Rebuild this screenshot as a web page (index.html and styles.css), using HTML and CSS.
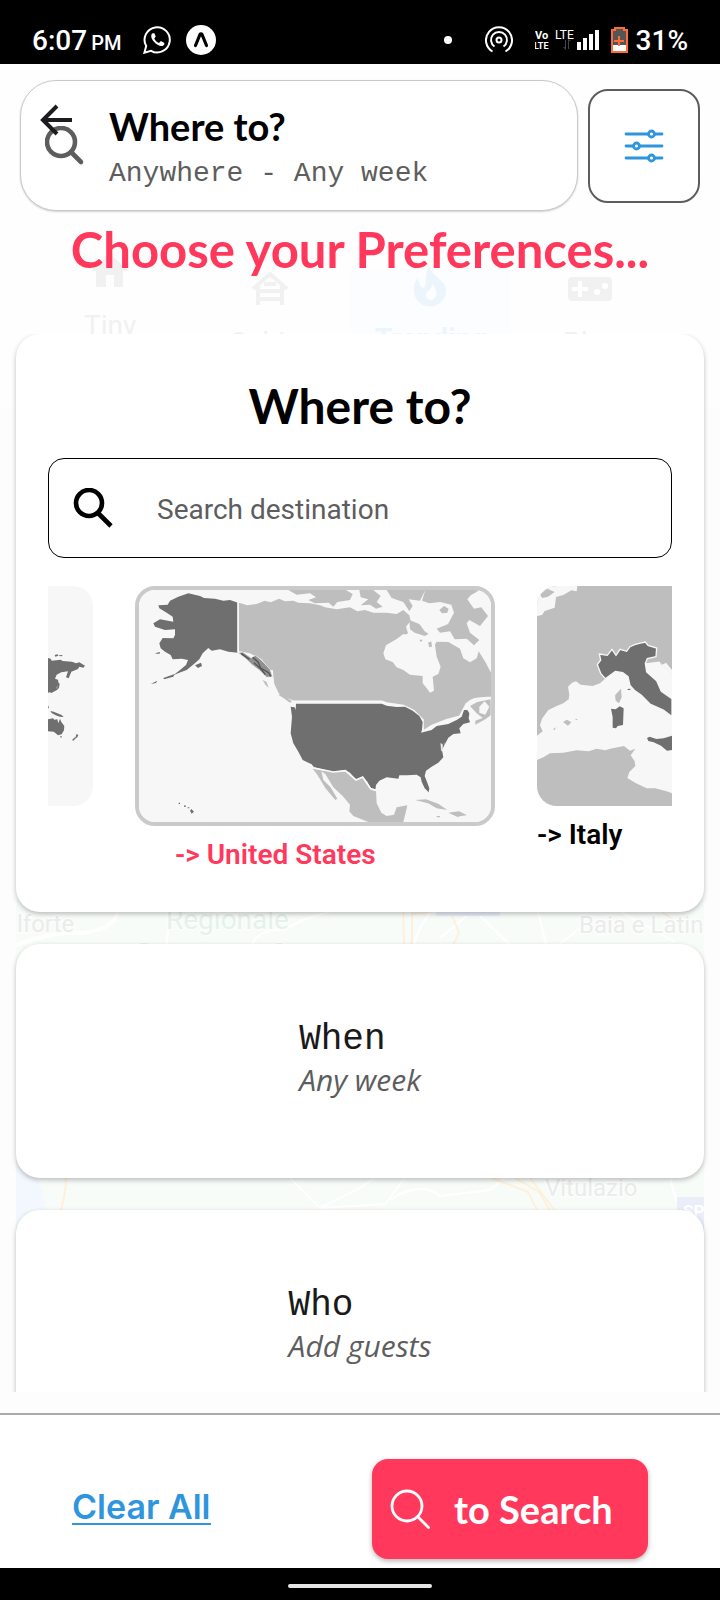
FILE: index.html
```html
<!DOCTYPE html>
<html lang="en">
<head>
<meta charset="utf-8">
<meta name="viewport" content="width=device-width, initial-scale=1">
<title>Choose your Preferences</title>
<link rel="stylesheet" href="styles.css">
</head>
<body>
<div class="app">
  <div class="status-bar">
    <span class="clock">6:07<small>PM</small></span>
    <svg class="whatsapp" width="28" height="28" viewBox="0 0 28 28" fill="none" stroke="#fff" stroke-width="2"><path d="M1.4 26.7 3.2 20A12.6 12.6 0 1 1 8 24.8Z"/><path d="M9.6 7.2C7.6 8.4 7.8 12 10.5 15.3s6.300 5.200 9 4.700c2-.7 2.200-2.600 1.600-3.300l-3.200-1.600-1.900 1.900c-2.200-1-3.800-2.600-4.700-4.600l1.400-1.900-1.300-3.200Z" fill="#fff" stroke="none"/></svg>
    <svg width="30" height="30" viewBox="0 0 30 30"><circle cx="15" cy="15" r="15" fill="#fff"/><path d="M9.500 20.500 14 9.500q1-1.500 2 0l4.500 11" fill="none" stroke="#000" stroke-width="3.200" stroke-linecap="round"/></svg>
    <span class="spacer"></span>
    <svg class="dot" width="8" height="8" viewBox="0 0 8 8"><circle cx="4" cy="4" r="4" fill="#fff"/></svg>
    <svg class="hotspot" width="28" height="28" viewBox="0 0 28 28" fill="none" stroke="#fff" stroke-width="2"><path d="M7.500 25.500A13 13 0 1 1 20.500 25.500"/><path d="M9.500 20.500A8 8 0 1 1 18.500 20.500"/><circle cx="14" cy="14" r="2.500"/></svg>
    <svg width="64" height="24" viewBox="0 0 64 24" font-family="Roboto, sans-serif" fill="#fff"><g font-weight="700"><text x="0" y="11" font-size="11">Vo</text><text x="-1" y="21" font-size="9">LTE</text></g><text x="20" y="11" font-size="12">LTE</text><path d="M30 12v7h-2l3 3V12M34 21v-8h2l-3-2v10" fill="#444"/><path d="M42 14h4v8h-4zM48 10h4v12h-4zM54 6h4v16h-4zM60 2h4v20h-4z"/></svg>
    <svg class="battery" width="17" height="26" viewBox="0 0 17 26"><path d="M1 3h3V1h9v2h3v22H1Z" fill="#555" stroke="#ff6c3c" stroke-width="2"/><path d="M2 18h13v6H2z" fill="#fff"/><path d="M8 9v10M3 14h10" stroke="#ff6c3c" stroke-width="2"/></svg>
    <span class="clock">31%</span>
  </div>

  <div class="page">
    <div class="backdrop" aria-hidden="true">
      <svg class="backdrop-categories" viewBox="0 0 720 150" fill="#f1f1f1" font-family="Roboto, sans-serif" font-size="28">
        <path d="M350 60h160v90H350z" fill="#fcfdfe"/>
        <path d="M91 61 110 44l19 17h-6v16h-9V65h-8v12H96V61Z"/>
        <g fill="none" stroke="#f1f1f1" stroke-width="4"><path d="m253 79 17-15 17 15M258 76v19M282 76v19M258 81h24M258 89h24M264 74h12"/></g>
        <path d="M430 56c2 12 16 14 16 24a16 16 0 0 1-32 1c-1-7 2-11 4-13 1 9 6 12 7 8 2-7-1-13 5-20Zm2 18c0 7-6 6-6 11 0 3 3 5 5 5 8-2 6-12 1-16Z" fill="#edf5fc" fill-rule="evenodd"/>
        <rect x="568" y="67" width="44" height="24" rx="4"/><path d="M580 71v16M572 79h16" stroke="#fff" stroke-width="4"/><circle cx="597" cy="82" r="3" fill="#fff"/><circle cx="605" cy="76" r="3" fill="#fff"/>
        <text x="84" y="125">Tiny</text><text x="229" y="142">Cabins</text><text x="375" y="138" font-weight="700" fill="#edf5fc">Trending</text><text x="563" y="142">Play</text>
      </svg>
      <svg class="backdrop-map" viewBox="16 900 688 350" fill="none" font-family="Roboto, sans-serif">
        <path d="M16 900h688v350H16z" fill="#f8fcf9"/>
        <path d="M16 1160h14l10 25 8 30v35H16z" fill="#f3f8fe"/>
        <g stroke="#fff" stroke-width="2"><path d="M16 945q40-14 60-12 30 0 40-16l4-12" stroke-width="4"/><path d="m160 900 10 20-4 26M250 948q8-20 35-18 15-12 60-22l40-8M414 944q6-22 22-38M440 938l34-28 35 34M536 904l10 40M560 944l25-20M600 900l75 42M290 1178l30 30 40-20 20-14M320 1208l65-4 20-26M390 1200q30-20 50-4l50-6 18-15M670 1175q5 30 14 36"/></g>
        <g stroke="#fff0db" stroke-width="2"><path d="m403 900 1 46M412 900v46M412 914l38-5 9 24-6 12M662 912l14 10M66 1176q0 20-7 40M492 1178l36 14 12 24M515 1178l24 14 14 24M530 1178l26 34"/></g>
        <path d="M436 900h64v16h-64zM677 1197h27v40h-27z" fill="#e9eef9"/>
        <g fill="#eaebeb" stroke="#fcfdfc" stroke-width="3" paint-order="stroke" font-size="24"><text x="17" y="932">lforte</text><text x="579" y="933">Baia e Latin</text><text x="545" y="1196">Vitulazio</text><text x="166" y="929" font-size="28" fill="#e4f2eb">Regionale</text><text x="138" y="960" fill="#e4f2eb">R</text><text x="271" y="960" fill="#e4f2eb">C</text></g>
        <text x="683" y="1217" font-size="17" font-weight="700" fill="#fff">SP</text>
      </svg>
    </div>

    <header class="top">
      <button class="search-pill" type="button">
        <svg width="40" height="40" viewBox="0 0 40 40" fill="none" stroke="#5e5d5e" stroke-width="4.600" stroke-linecap="round"><circle cx="16" cy="16" r="14"/><path d="m26 26 10 10"/></svg>
        <span class="pill-text"><span class="pill-title">Where to?</span><span class="pill-sub">Anywhere - Any week</span></span>
      </button>
      <a class="back" href="#back" aria-label="Back"><svg width="32" height="32" viewBox="0 0 32 32" fill="none" stroke="#1c1b1f" stroke-width="4"><path d="M32 16H3M17 2 3 16l14 14"/></svg></a>
      <button class="filter" type="button" aria-label="Filters"><svg width="40" height="36" viewBox="0 0 40 36" fill="#fff" stroke="#2f95dc" stroke-width="2.800" stroke-linecap="round"><path d="M2 6h36M2 18h36M2 30h36"/><circle cx="27.500" cy="6" r="3"/><circle cx="12.500" cy="18" r="3"/><circle cx="27.500" cy="30" r="3"/></svg></button>
    </header>

    <h1 class="headline">Choose your Preferences...</h1>

    <main class="cards">
      <section class="card where">
        <h2>Where to?</h2>
        <label class="search-box">
          <svg width="40" height="40" viewBox="0 0 40 40" fill="none" stroke="#000" stroke-width="4.600"><circle cx="16" cy="15" r="13"/><path d="m25 25 13 13"/></svg>
          <input type="text" placeholder="Search destination" aria-label="Search destination">
        </label>
        <div class="places">
          <div class="place world">
            <svg viewBox="144 -162 135 660" preserveAspectRatio="xMaxYMin slice"><path d="M144-162h135v660H144z" fill="#f7f7f7"/><path d="M144 54 152 56 155 62 182 59 188 63 216 65 228 70 238 67 255 77 250 83 238 80 234 87 214 95 206 115 198 112 204 94 184 97 170 104 165 116 174 119 176 131 168 146 158 154 150 157 144 158ZM164 45l9-2 2 4-9 3ZM178 45l10 1-2 3-8-1ZM176 128l3 3-2 12-6 7-10 5-8 5-2-3 12-7 8-6ZM144 238l15-3 4 4 9-1 3 12 5-14 4 10 9 12-1 13-7 12-11 3-7-6-6-5-18-1ZM180 289h6l-3 6ZM151 213l10 2 11 5 13 5 6 6-12-1-12-4-12-7ZM144 195l3 9-3 1ZM230 281l5 5-5 9-3-5ZM226 290l2 4-8 8-4-2Z" fill="#6f6f6f"/></svg>
          </div>
          <div class="place selected">
            <svg viewBox="57 60 1056 696" preserveAspectRatio="xMidYMid slice">
              <path d="M57 60h1056v696H57z" fill="#f7f7f7"/>
              <!-- Canada -->
              <path d="M357 98 382 106 410 102 434 92 452 97 477 86 495 94 520 92 535 98 570 100 600 106 615 112 650 118 690 112 712 124 735 120 760 128 800 128 830 132 850 120 868 136 872 152 858 170 864 190 840 205 870 230 940 230 950 215 985 216 1020 236 1030 265 1050 277 1070 265 1076 244 1096 276 1113 308V384L1060 388 1035 408 1018 440 980 450 935 468 910 486 908 450 880 422 850 408 800 400 785 394H526L478 374 462 340 455 310 425 268 390 250 357 244Z" fill="#bebebe"/>
              <!-- Arctic islands -->
              <path d="M505 60 530 74 570 70 588 82 565 90 584 100 626 98 640 110 652 96 690 90 698 72 678 60ZM718 60 722 82 745 88 722 106 750 104 768 116 788 110 770 96 782 78 760 60ZM800 60 815 84 850 96 868 124 878 108 866 88 900 92 916 60ZM916 60 906 92 928 100 960 96 994 104 1002 128 984 162 950 176 960 188 990 184 1004 208 1040 206 1062 226 1078 210 1050 188 1040 160 1048 150 1080 168 1104 138 1084 112 1062 116 1042 88 1052 76 1080 60Z" fill="#bebebe"/>
              <!-- Hudson Bay -->
              <path d="M830 207 850 192 866 196 880 186 905 194 928 186 950 200 945 225 950 260 962 290 955 312 938 320 942 362 930 368 918 352 908 340 908 318 870 314 850 300 830 292 818 276 796 268 790 250 798 226Z" fill="#f7f7f7"/>
              <path d="M868 150 898 162 914 184 926 192 914 198 884 188 870 178ZM898 209h10l-5 8ZM924 218l10-4 2 16-8 2ZM958 120l14-12 14 8-4 12-16 2ZM829 153l20 7 8 8-18-4Z" fill="#bebebe"/>
              <!-- Mexico and the Caribbean -->
              <path d="M578 596 614 602 660 606 680 602 710 630 728 622 750 656 768 662 770 700 784 728 800 738 822 734 830 712 862 706 858 724 850 756H745L700 738 688 724 690 704 668 678 640 652 616 612 604 604 610 630 632 652 652 686 646 690 616 654 592 614ZM886 690 918 688 956 702 982 720 950 715 924 700ZM985 728 1017 724 1041 736 1023 738 1013 741ZM950 738h10v4h-10Z" fill="#bebebe"/>
              <path d="M1113 384Q1056 382 1040 402L1020 440 980 450 935 468 908 486 908 450 880 422 850 408 800 400 785 395H526L530 418 512 406 474 374 460 350 455 300" fill="none" stroke="#f7f7f7" stroke-width="7"/>
              <path d="M1050 408 1072 396 1112 388V436L1096 448 1066 464 1066 452 1088 444 1070 430Z" fill="#bebebe"/><path d="m1078 410 16-16 14 16-12 24-18-6Z" fill="#f7f7f7"/>
              <!-- Alaska -->
              <path d="M115 106 143 104 150 92 175 80 205 70 240 78 252 84 285 86 310 92 330 90 354 98V248L325 245 300 238 275 242 265 234 248 250 238 268 222 282 200 300 178 308 160 316 180 300 198 285 204 270 185 266 158 268 152 255 135 245 122 235 118 220 128 204 160 205 165 195 165 178 135 180 105 170 100 160 120 148 160 155 158 140 140 128 118 115ZM225 286 243 278 246 288 234 294ZM104 250l16-4-2 6ZM130 324l34-12-4 8-28 8ZM92 342l20-10-4 7Z" fill="#6f6f6f"/>
              <path d="M354 96v152" stroke="#f7f7f7" stroke-width="5"/>
              <path d="M354 248 368 246 394 264 406 256 424 270 450 298 458 320 440 322 420 302 396 284 378 266Z" fill="#909090" stroke="#f7f7f7" stroke-width="2"/><path d="m398 262 16 14 8 18 24 14 6 12M364 251l24 17M402 278l22 20 12 16" stroke="#555" stroke-width="4" fill="none"/>
              <path d="m428 330 12 6 6 18-10-10ZM474 374l18 2 24 18-6 4-20-14Z" fill="#bebebe"/>
              <!-- Contiguous states -->
              <path d="M528 401H785L800 407 830 411 855 410 878 422 898 438 908 456 906 480 903 488 935 480 950 468 985 462 1010 450 1025 440 1032 420 1042 420 1048 430 1046 445 1050 457 1030 462 1018 475 1022 490 1000 492 985 503 975 522 966 540 970 562 955 578 935 590 918 602 914 618 922 638 928 655 926 667 914 655 905 635 902 622 890 614 860 616 838 616 835 626 800 622 778 632 768 645 766 660 752 655 742 635 728 620 708 630 690 608 676 600 640 606 582 592 575 583 548 570 535 545 520 520 512 490 516 440 512 410 524 412 527 420Z" fill="#6f6f6f"/>
              <path d="M582 594 640 606 676 602 708 630 728 621 752 656 768 661" fill="none" stroke="#fafafa" stroke-width="5"/>
              <path d="m962 520 6 4 0 20-4-2ZM972 518l5 14" fill="#eee" stroke="#eee"/>
              <path d="m210 722 4-5 8 8-7 6ZM203 712h5v3h-5ZM192 706l6 1v3h-6ZM176 698h4v4h-4Z" fill="#6f6f6f"/>
            </svg>
            <p>-&gt; United States</p>
          </div>
          <div class="place italy">
            <svg viewBox="111 48 405 660" preserveAspectRatio="xMinYMin slice">
              <path d="M111 48h405v660H111z" fill="#bebebe"/>
              <path d="m111 48h121l-2 16-16-3-24 14-22 6-4 32-30 10-8 12-15 3Z" fill="#f7f7f7"/><path d="m120 72 22-16 22 10-20 14-18 4Z" fill="#bebebe"/>
              <path d="M111 497 128 484 120 466 126 446 145 420 170 408 190 400 206 388 208 374 204 350 216 338 228 334 242 344 278 348 300 340 318 324 345 304 437 280 516 270V670L500 664 465 655 440 655 408 640 382 624 388 606 406 588 404 574 392 556 406 536 390 542 372 528 330 536 316 541 290 536 266 544 230 541 190 548 150 550 130 562 111 570Z" fill="#f7f7f7"/>
              <path d="M465 230 473 262 484 286 498 278 516 300V225Z" fill="#bebebe"/><path d="m482 280 10 10 14 10 10 18" fill="none" stroke="#f3f3f3" stroke-width="3"/>
              <path d="M298 252 322 256 336 238 348 256 360 238 380 244 390 230 404 224 418 220 436 216 444 226 470 234 468 260 442 266 436 280 440 306 470 332 484 364 516 386V440L490 420 450 402 424 376 404 362 390 346 384 320 368 308 346 304 316 326 302 310 292 284 302 270Z" fill="#6f6f6f" stroke="#f7f7f7" stroke-width="4"/>
              <path d="m333 416 14 2 12-9 12 6-2 50-16 3-5 7-10-2 0-32ZM441 504l8-4 20 7 22-2 25-8v43l-15 2-18-15-22-10-16-4ZM383 357l8-1v4h-8Z" fill="#6f6f6f"/>
              <path d="m345 376 18-20 2 26-8 18-10-8ZM189 456l12-7 13 8-10 10ZM224 446l9 1-3 4ZM159 478l8-6-2 8Z" fill="#bebebe"/>
            </svg>
            <p>-&gt; Italy</p>
          </div>
        </div>
      </section>
      <section class="card brief"><div><h3>When</h3><p>Any week</p></div></section>
      <section class="card brief"><div><h3>Who</h3><p>Add guests</p></div></section>
    </main>
  </div>

  <footer class="actions">
    <a class="clear" href="#clear">Clear All</a>
    <button class="go" type="button">
      <svg width="40" height="40" viewBox="0 0 40 40" fill="none" stroke="#fff" stroke-width="2.800" stroke-linecap="round"><circle cx="17" cy="17" r="15"/><path d="m28 28 10.500 10.500"/></svg>
      <span>to Search</span>
    </button>
  </footer>
  <div class="nav-bar"><span></span></div>
</div>
</body>
</html>
```
FILE: styles.css
```css
* { box-sizing: border-box; }
body { margin: 0; background: #fff; font-family: Roboto, sans-serif; color: #000; }
h1, h2, h3, p { margin: 0; }
button { font: inherit; cursor: pointer; padding: 0; }
svg { display: block; flex: none; }

.app { display: flex; flex-direction: column; height: 100vh; overflow: hidden; }

.status-bar { display: flex; align-items: center; height: 64px; flex: none; padding: 16px 32px 0; background: #000; color: #fff; }
.clock { display: flex; align-items: baseline; gap: 4px; font-size: 28px; font-weight: 500; white-space: nowrap; }
.clock small { font-size: 20px; }
.whatsapp { margin: 0 15px 0 22px; }
.spacer { flex: 1; }
.hotspot { margin: 0 22px 0 33px; }
.battery { margin: 0 8px 0 12px; }

.page { position: relative; display: flex; flex-direction: column; flex: 1; min-height: 0; padding-bottom: 21px; background: linear-gradient(#fefefe 344px, #fdfdfd 344px); }
.backdrop { position: absolute; inset: 0; overflow: hidden; }
.backdrop svg { position: absolute; }
.backdrop-categories { top: 146px; left: 0; width: 100%; height: 150px; }
.backdrop-map { top: 836px; left: 16px; width: calc(100% - 32px); height: 350px; }

.top { position: relative; display: flex; align-items: center; gap: 10px; padding: 16px 20px 0; }
.search-pill { display: flex; align-items: center; gap: 24px; flex: 1; height: 131px; padding: 0 24px; border: 1px solid #c9c9c9; border-radius: 36px; background: #fff; box-shadow: 0 1px 2px rgba(0, 0, 0, .18); text-align: left; }
.pill-text { display: flex; flex-direction: column; gap: 8px; padding-top: 4px; }
.pill-title { font: 700 38px/44px Lato, sans-serif; color: #000; }
.pill-sub { font: 28px/36px "Liberation Mono", monospace; color: #5e5d5e; }
.back { position: absolute; left: 40px; top: 40px; }
.filter { display: flex; align-items: center; justify-content: center; width: 112px; height: 114px; border: 2px solid #5e5d5e; border-radius: 20px; background: #fff; }

.headline { position: relative; padding: 8px 16px 55px; font: 700 49px/60px Lato, sans-serif; color: #ff385c; text-align: center; white-space: nowrap; }

.cards { position: relative; display: flex; flex-direction: column; gap: 32px; flex: 1; min-height: 0; padding: 0 16px; overflow: hidden; }
.card { flex: none; border-radius: 24px; background: #fff; box-shadow: 0 2px 5px rgba(0, 0, 0, .26); }
.where { padding: 44px 32px 41px; }
.where h2 { font: 700 48px/56px Lato, sans-serif; text-align: center; }
.search-box { display: flex; align-items: center; gap: 44px; height: 100px; margin: 24px 0 28px; padding: 0 24px; border: 1px solid #000; border-radius: 16px; }
.search-box input { flex: 1; min-width: 0; padding: 4px 0 0; border: 0; outline: 0; background: none; font: 28px/36px Roboto, sans-serif; }
.search-box input::placeholder { color: #5e5d5e; opacity: 1; }

.places { display: flex; align-items: flex-start; gap: 42px; overflow: hidden; }
.place p { margin-top: 13px; font-size: 28px; line-height: 32px; font-weight: 600; white-space: nowrap; }
.place svg { width: 100%; height: 220px; }
.world { flex: none; width: 45px; }
.world svg { border-radius: 0 20px 20px 0; }
.selected { flex: none; width: 360px; }
.selected svg { height: 240px; border: 4px solid #cacaca; border-radius: 20px; }
.selected p { padding-left: 40px; color: #ff385c; }
.italy { flex: 1; min-width: 0; }
.italy svg { border-radius: 20px 0 0 20px; }

.brief { display: flex; justify-content: center; padding: 74px 32px 80px; }
.brief h3 { font: 400 36px/44px "Liberation Mono", monospace; color: #1a1a1a; }
.brief p { font: italic 30px/36px "Open Sans", sans-serif; color: #5e5d5e; }

.actions { display: flex; align-items: flex-start; justify-content: space-between; flex: none; height: 155px; padding: 44px 72px 0; border-top: 2px solid #ababab; background: #fff; }
.clear { margin-top: 30px; padding-top: 2px; border-bottom: 2px solid #2f95dc; font: 600 34px/32px Inter, sans-serif; color: #2f95dc; text-decoration: none; }
.go { display: flex; align-items: center; gap: 24px; width: 276px; height: 100px; padding: 0 18px; border: 0; border-radius: 16px; background: #ff385c; color: #fff; box-shadow: 0 2px 5px rgba(0, 0, 0, .3); font: 700 38px/44px Lato, sans-serif; white-space: nowrap; }

.nav-bar { display: flex; align-items: center; justify-content: center; flex: none; height: 32px; padding-top: 4px; background: #000; }
.nav-bar span { width: 20%; height: 4px; border-radius: 2px; background: #e5e5e5; }
```
